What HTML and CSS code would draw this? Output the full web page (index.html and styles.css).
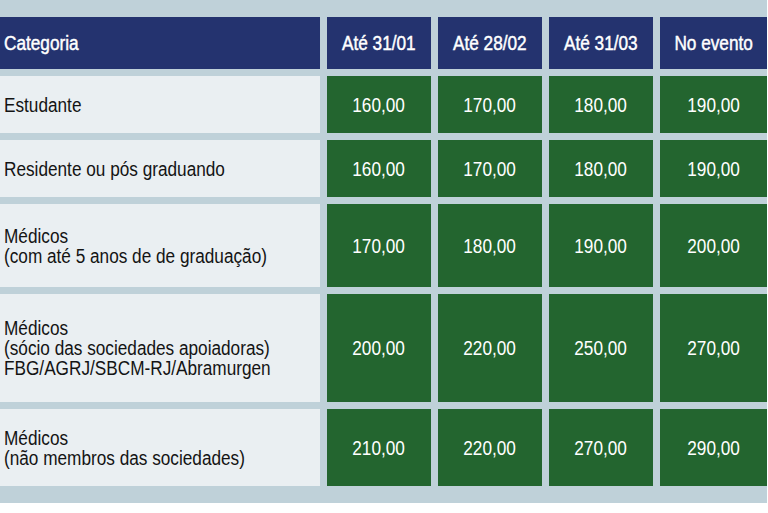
FILE: index.html
```html
<!DOCTYPE html>
<html lang="pt">
<head>
<meta charset="utf-8">
<title>Tabela de inscrições</title>
<link rel="stylesheet" href="styles.css">
</head>
<body>
<div class="table">
  <div class="cell head cat"><span class="txt">Categoria</span></div>
  <div class="cell head"><span class="txt">Até 31/01</span></div>
  <div class="cell head"><span class="txt">Até 28/02</span></div>
  <div class="cell head"><span class="txt">Até 31/03</span></div>
  <div class="cell head"><span class="txt">No evento</span></div>

  <div class="cell cat"><span class="txt">Estudante</span></div>
  <div class="cell price"><span class="txt">160,00</span></div>
  <div class="cell price"><span class="txt">170,00</span></div>
  <div class="cell price"><span class="txt">180,00</span></div>
  <div class="cell price"><span class="txt">190,00</span></div>

  <div class="cell cat"><span class="txt">Residente ou pós graduando</span></div>
  <div class="cell price"><span class="txt">160,00</span></div>
  <div class="cell price"><span class="txt">170,00</span></div>
  <div class="cell price"><span class="txt">180,00</span></div>
  <div class="cell price"><span class="txt">190,00</span></div>

  <div class="cell cat"><span class="txt">Médicos<br>(com até 5 anos de de graduação)</span></div>
  <div class="cell price"><span class="txt">170,00</span></div>
  <div class="cell price"><span class="txt">180,00</span></div>
  <div class="cell price"><span class="txt">190,00</span></div>
  <div class="cell price"><span class="txt">200,00</span></div>

  <div class="cell cat"><span class="txt">Médicos<br>(sócio das sociedades apoiadoras)<br>FBG/AGRJ/SBCM-RJ/Abramurgen</span></div>
  <div class="cell price"><span class="txt">200,00</span></div>
  <div class="cell price"><span class="txt">220,00</span></div>
  <div class="cell price"><span class="txt">250,00</span></div>
  <div class="cell price"><span class="txt">270,00</span></div>

  <div class="cell cat"><span class="txt">Médicos<br>(não membros das sociedades)</span></div>
  <div class="cell price"><span class="txt">210,00</span></div>
  <div class="cell price"><span class="txt">220,00</span></div>
  <div class="cell price"><span class="txt">270,00</span></div>
  <div class="cell price"><span class="txt">290,00</span></div>
</div>
</body>
</html>
```
FILE: styles.css
```css
html, body {
  margin: 0;
  padding: 0;
  background: #ffffff;
}
.table {
  width: 767px;
  box-sizing: border-box;
  background: #bfd1d9;
  padding: 17px 0;
  display: grid;
  grid-template-columns: 320px 104px 104px 104px 107px;
  grid-template-rows: 52px 57px 57px 83px 108px 77px;
  gap: 7px;
  font-family: "Liberation Sans", Arial, sans-serif;
  font-size: 20px;
  line-height: 20px;
}
.cell {
  display: flex;
  align-items: center;
  justify-content: center;
  text-align: center;
  box-sizing: border-box;
}
.txt {
  display: inline-block;
  white-space: nowrap;
  transform: scaleX(0.86);
  transform-origin: center center;
}
.head {
  background: #24336f;
  color: #ffffff;
  -webkit-text-stroke: 0.45px #ffffff;
}
.cat {
  justify-content: flex-start;
  text-align: left;
  padding-left: 4px;
  background: #eaeff2;
  color: #141414;
}
.cat .txt {
  transform-origin: left center;
}
.head.cat {
  background: #24336f;
  color: #ffffff;
}
.price {
  background: #23652f;
  color: #ffffff;
}
```
